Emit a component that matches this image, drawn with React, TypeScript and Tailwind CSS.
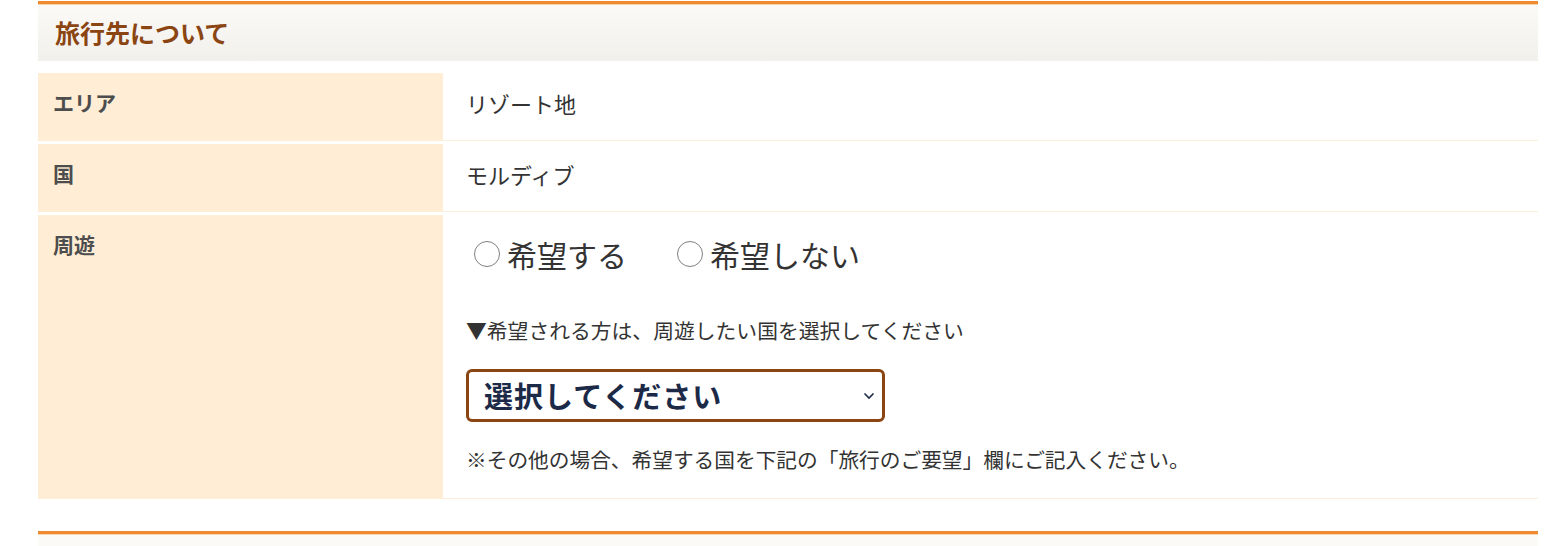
import React from 'react';

const font = { fontFamily: '"Noto Sans CJK JP", "Noto Sans", sans-serif' };

function Row({ label, children, last }: { label: string; children: React.ReactNode; last?: boolean }) {
  return (
    <div className={`flex ${last ? '' : 'mb-[3px]'}`}>
      <div className="w-[405px] shrink-0 bg-[#ffeed5] pl-[15px] pt-[14px] text-[21px] font-bold leading-[30px] text-[#4d4d4d]">
        {label}
      </div>
      <div className="flex-1 border-b border-[#fdefdc] pl-[23px]">{children}</div>
    </div>
  );
}

function Radio({ label }: { label: string }) {
  return (
    <label className="flex items-center gap-[7px]">
      <span className="block h-[26px] w-[26px] rounded-full border-[1.5px] border-[#808080] bg-white" />
      <span>{label}</span>
    </label>
  );
}

export default function App() {
  return (
    <div className="min-h-[546px] bg-white" style={font}>
      <div className="ml-[38px] w-[1500px] pt-px">
        <div className="h-[3px] bg-[#f08a2e]" />
        <div className="h-px bg-[#f8d3ac]" />
        <div className="flex h-[56px] items-center bg-gradient-to-b from-[#fbfaf7] to-[#f1f0eb] pl-[17px]">
          <h2 className="text-[25px] font-bold text-[#8b4513]">旅行先について</h2>
        </div>

        <div className="mt-[12px]">
          <Row label="エリア">
            <div className="h-[67px] pt-[15px] text-[22px] leading-[30px] text-[#333]">リゾート地</div>
          </Row>
          <Row label="国">
            <div className="h-[67px] pt-[15px] text-[22px] leading-[30px] text-[#333]">モルディブ</div>
          </Row>
          <Row label="周遊" last>
            <div className="pb-[24px] pt-[19px] text-[#333]">
              <div className="flex h-[40px] items-center gap-[50px] pl-[8px] text-[30px] leading-[40px]">
                <Radio label="希望する" />
                <Radio label="希望しない" />
              </div>
              <p className="mt-[41px] text-[20.8px] leading-[30px]">▼希望される方は、周遊したい国を選択してください</p>
              <div className="relative mt-[24px] w-[419px]">
                <select
                  className="h-[53px] w-full appearance-none rounded-[6px] border-[3px] border-[#8b4513] bg-white pl-[15px] pr-[40px] text-[29px] font-bold tracking-[1px] text-[#1c2a48] outline-none"
                  style={font}
                  defaultValue=""
                >
                  <option value="">選択してください</option>
                </select>
                <svg
                  className="pointer-events-none absolute right-[10px] top-1/2 -translate-y-1/2"
                  width="12"
                  height="8"
                  viewBox="0 0 12 8"
                  fill="none"
                >
                  <path d="M1.5 1.5 6 6l4.5-4.5" stroke="#1c2a48" strokeWidth="1.6" />
                </svg>
              </div>
              <p className="mt-[22px] text-[20.7px] leading-[30px]">
                ※その他の場合、希望する国を下記の「旅行のご要望」欄にご記入ください。
              </p>
            </div>
          </Row>
        </div>

        <div className="mt-[32px] h-[3px] bg-[#f08a2e]" />
        <div className="h-px bg-[#f8d3ac]" />
        <div className="h-[12px] bg-[#fbfaf7]" />
      </div>
    </div>
  );
}
